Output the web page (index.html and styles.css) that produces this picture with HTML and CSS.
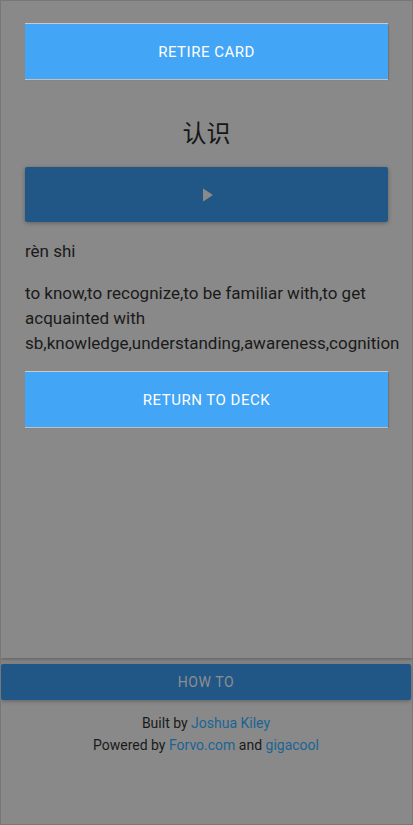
FILE: index.html
```html
<!DOCTYPE html>
<html lang="en">
<head>
<meta charset="utf-8">
<title>Card</title>
<link rel="stylesheet" href="styles.css">
</head>
<body>
<div class="page">
  <main class="card">
    <button class="btn btn-light">RETIRE CARD</button>
    <h1 class="hanzi">认识</h1>
    <button class="btn btn-dark btn-play" aria-label="Play">
      <svg width="12" height="14" viewBox="0 0 12 14"><path d="M1 0.5 L11 7 L1 13.5 Z" fill="#8a8a8a"/></svg>
    </button>
    <p class="pinyin">rèn shi</p>
    <p class="definition">to know,to recognize,to be familiar with,to get acquainted with sb,knowledge,understanding,awareness,cognition</p>
    <button class="btn btn-light">RETURN TO DECK</button>
  </main>
  <footer class="footer">
    <button class="btn-howto">HOW TO</button>
    <div class="credits">
      <div>Built by <a href="#">Joshua Kiley</a></div>
      <div>Powered by <a href="#">Forvo.com</a> and <a href="#">gigacool</a></div>
    </div>
  </footer>
</div>
</body>
</html>
```

FILE: styles.css
```css
* { box-sizing: border-box; }
html, body { margin: 0; padding: 0; }
body {
  background: #898989;
  font-family: Roboto, "Noto Sans", sans-serif;
  color: #1a1a1a;
}
.page {
  height: 825px;
  border: 1px solid #777777;
  display: flex;
  flex-direction: column;
  overflow: hidden;
}
.card {
  height: 657px;
  flex: none;
  padding: 23px 24px 0 24px;
  display: flex;
  flex-direction: column;
  box-shadow: 0 2px 3px rgba(0,0,0,0.25);
  position: relative;
  z-index: 1;
}
.btn {
  display: flex;
  align-items: center;
  justify-content: center;
  width: 363px;
  height: 55px;
  border: 0;
  margin: 0;
  padding: 0;
  font-family: Roboto, sans-serif;
  font-size: 15px;
  letter-spacing: 0.5px;
  cursor: pointer;
}
.btn-light {
  background: #42a5f5;
  color: #ffffff;
  box-shadow: 0 -1px 0 rgba(255,255,255,0.55), 0 1px 0 rgba(255,255,255,0.55), 1px 1px 1px rgba(0,0,0,0.15);
}
.btn-dark {
  background: #215786;
  border-radius: 2px;
  box-shadow: 0 1px 4px rgba(0,0,0,0.3);
}
.hanzi {
  margin: 37px 0 19px 0;
  font-family: "Noto Sans CJK SC", sans-serif;
  font-weight: 400;
  font-size: 24px;
  line-height: 32px;
  text-align: center;
  color: #161616;
}
.btn-play svg { display: block; margin-left: 2px; }
.pinyin {
  margin: 17px 0 0 0;
  font-size: 17px;
  line-height: 25px;
}
.definition {
  margin: 17px 0 16px 0;
  font-size: 17px;
  line-height: 25px;
  width: 363px;
}
.footer {
  padding: 6px 1px 0 0;
  display: flex;
  flex-direction: column;
}
.btn-howto {
  width: 410px;
  height: 36px;
  border: 0;
  border-radius: 2px;
  background: #215786;
  color: #8e8e8e;
  font-family: Roboto, sans-serif;
  font-size: 14px;
  letter-spacing: 0.6px;
  box-shadow: 0 1px 4px rgba(0,0,0,0.3);
  padding: 0;
}
.credits {
  margin-top: 12px;
  text-align: center;
  font-size: 14px;
  line-height: 22px;
  color: #1a1a1a;
}
.credits a {
  color: #1a6494;
  text-decoration: none;
}
```
